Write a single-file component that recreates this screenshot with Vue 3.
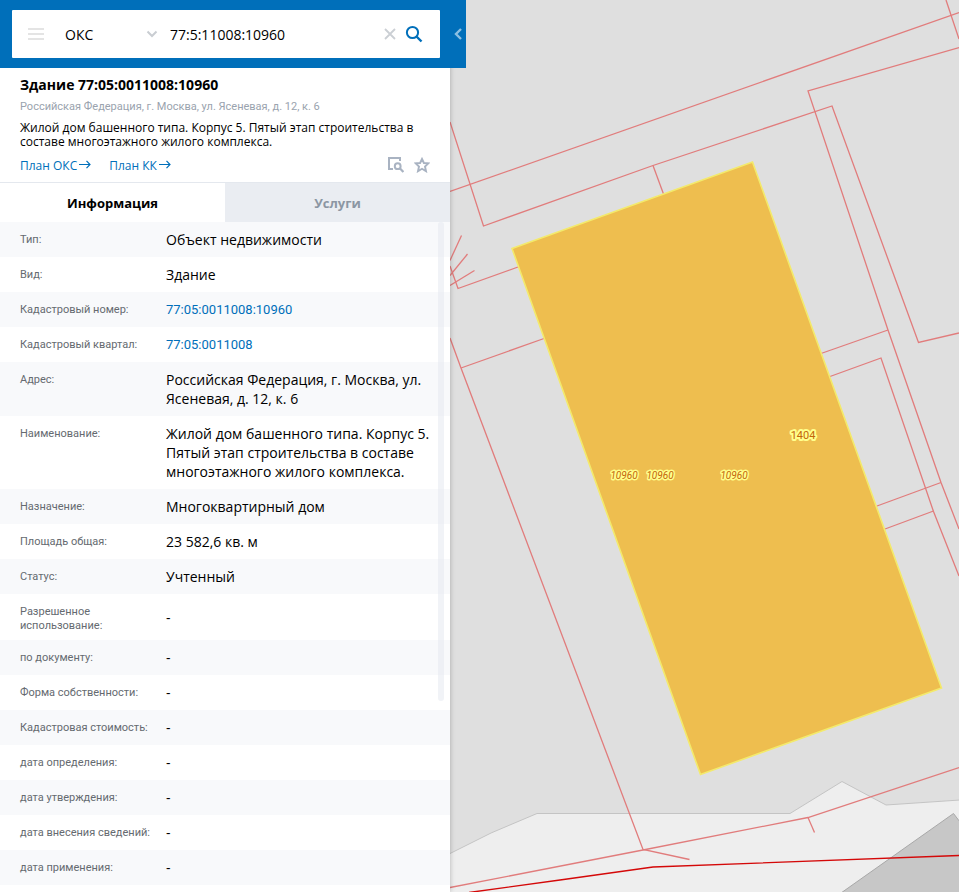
<script setup>
import { ref } from 'vue'

const category = ref('ОКС')
const query = ref('77:5:11008:10960')
const activeTab = ref('info')

const tabs = [
  { id: 'info', label: 'Информация' },
  { id: 'services', label: 'Услуги' }
]

const rows = [
  { label: 'Тип:', value: 'Объект недвижимости' },
  { label: 'Вид:', value: 'Здание' },
  { label: 'Кадастровый номер:', value: '77:05:0011008:10960', link: true },
  { label: 'Кадастровый квартал:', value: '77:05:0011008', link: true },
  { label: 'Адрес:', value: 'Российская Федерация, г. Москва, ул. Ясеневая, д. 12, к. 6' },
  {
    label: 'Наименование:',
    value: 'Жилой дом башенного типа. Корпус 5. Пятый этап строительства в составе многоэтажного жилого комплекса.'
  },
  { label: 'Назначение:', value: 'Многоквартирный дом' },
  { label: 'Площадь общая:', value: '23 582,6 кв. м' },
  { label: 'Статус:', value: 'Учтенный' },
  { label: 'Разрешенное использование:', value: '-' },
  { label: 'по документу:', value: '-' },
  { label: 'Форма собственности:', value: '-' },
  { label: 'Кадастровая стоимость:', value: '-' },
  { label: 'дата определения:', value: '-' },
  { label: 'дата утверждения:', value: '-' },
  { label: 'дата внесения сведений:', value: '-' },
  { label: 'дата применения:', value: '-' }
]

const parcelLines = [
  'M450 191.500L959 12.500',
  'M946 0L959 39',
  'M450 122L483.500 226L653 165.500L832 106L918.500 342.500L959 333',
  'M959 47.500L808 91L888 330L941 482.500L959 529',
  'M653 165.500L663.500 194',
  'M461.500 235.500L450 260.500',
  'M467.500 254L450 275.500',
  'M474.500 270.500L450 285.500',
  'M450 266L458 288.500L518 267',
  'M450 338L461 368L643 849.500L689.500 859.500',
  'M461 368L544 338.500',
  'M821 353.500L888 330',
  'M830 376.500L881 358L933.500 511.500L959 576',
  'M877 506L941 482.500',
  'M885 529L933.500 511',
  'M450 887.500L643 850L808 817.500L959 767.500',
  'M808 817.500L814.500 832.500'
]

const mapLabels = [
  { x: 624, y: 479, text: '10960', italic: true },
  { x: 660, y: 479, text: '10960', italic: true },
  { x: 734, y: 479, text: '10960', italic: true },
  { x: 803, y: 439, text: '1404', italic: false }
]
</script>

<template>
  <div class="app">
    <aside class="panel">
      <header class="topbar">
        <form class="search" role="search" @submit.prevent>
          <button class="icon-btn menu" type="button" aria-label="Меню">
            <svg width="16" height="12" viewBox="0 0 16 12"><path d="M0 1h16M0 6h16M0 11h16" stroke="#e4e4e4" stroke-width="2" /></svg>
          </button>
          <div class="category">
            <select v-model="category" aria-label="Тип объекта">
              <option>ОКС</option>
            </select>
            <svg class="chevron" width="12" height="8" viewBox="0 0 12 8"><path d="M1.500 1.500L6 6L10.500 1.500" fill="none" stroke="#c9cdd2" stroke-width="2" /></svg>
          </div>
          <input v-model="query" class="query" type="text" aria-label="Поиск" />
          <button class="icon-btn clear" type="button" aria-label="Очистить" @click="query = ''">
            <svg width="12" height="12" viewBox="0 0 12 12"><path d="M1 1L11 11M11 1L1 11" stroke="#cbcfd4" stroke-width="1.800" /></svg>
          </button>
          <button class="icon-btn find" type="submit" aria-label="Найти">
            <svg width="18" height="18" viewBox="0 0 18 18"><circle cx="7.500" cy="7.500" r="5.600" fill="none" stroke="#006fba" stroke-width="2" /><path d="M11.500 11.500L16.500 16.500" stroke="#006fba" stroke-width="2.400" /></svg>
          </button>
        </form>
        <button class="collapse" type="button" aria-label="Свернуть панель">
          <svg width="8" height="12" viewBox="0 0 8 12"><path d="M7 1L2 6L7 11" fill="none" stroke="#8bbfe2" stroke-width="2.400" /></svg>
        </button>
      </header>

      <section class="summary">
        <h1>Здание 77:05:0011008:10960</h1>
        <p class="address">Российская Федерация, г. Москва, ул. Ясеневая, д. 12, к. 6</p>
        <p class="description">Жилой дом башенного типа. Корпус 5. Пятый этап строительства в составе многоэтажного жилого комплекса.</p>
        <div class="actions">
          <a v-for="plan in ['План ОКС', 'План КК']" :key="plan" class="plan" href="#">
            <span>{{ plan }}</span>
            <svg width="12" height="10" viewBox="0 0 12 10"><path d="M0 4.500H11M7.500 .8L11 4.500L7.500 8.200" fill="none" stroke="currentColor" stroke-width="1.200" /></svg>
          </a>
          <span class="spacer"></span>
          <button class="icon-btn" type="button" aria-label="Показать на карте">
            <svg width="16" height="16" viewBox="0 0 16 16"><path d="M5 12H1V1H12V4" fill="none" stroke="#a9b3c2" stroke-width="2" /><circle cx="9.700" cy="9.200" r="2.900" fill="none" stroke="#a9b3c2" stroke-width="2" /><path d="M11.800 11.300L15.400 15" stroke="#a9b3c2" stroke-width="2.200" /></svg>
          </button>
          <button class="icon-btn" type="button" aria-label="В избранное">
            <svg width="16" height="16" viewBox="0 0 16 16"><path d="M8 2L9.900 6L14.300 6.400L11 9.500L12 14.200L8 11.800L4 14.200L5 9.500L1.700 6.400L6.100 6Z" fill="none" stroke="#a9b3c2" stroke-width="1.900" /></svg>
          </button>
        </div>
      </section>

      <div class="tabs" role="tablist">
        <button
          v-for="tab in tabs"
          :key="tab.id"
          class="tab"
          :class="{ active: activeTab === tab.id }"
          type="button"
          role="tab"
          :aria-selected="activeTab === tab.id"
          @click="activeTab = tab.id"
        >{{ tab.label }}</button>
      </div>

      <div class="details">
        <div class="scroll">
          <table>
            <tbody>
              <tr v-for="row in rows" :key="row.label">
                <th scope="row">{{ row.label }}</th>
                <td>
                  <a v-if="row.link" href="#">{{ row.value }}</a>
                  <template v-else>{{ row.value }}</template>
                </td>
              </tr>
            </tbody>
          </table>
        </div>
        <div class="thumb"></div>
      </div>
    </aside>

    <main class="map">
      <svg class="canvas" viewBox="450 0 509 892" preserveAspectRatio="xMinYMin slice" role="img" aria-label="Кадастровая карта">
        <path class="road" d="M449 854L491 833L537 813.500H790L842 781.500L886 805L960 800V893H449Z" />
        <path class="block" d="M841 893L953.500 813.500L960 822V893Z" />
        <path v-for="d in parcelLines" :key="d" class="parcel" :d="d" />
        <path class="quarter" d="M469 892.500L560 880L653 867L959 855.500" />
        <path class="building" d="M512 248.500L752.500 162L941.500 688L700.500 774.500Z" />
        <text
          v-for="label in mapLabels"
          :key="label.x"
          class="map-label"
          :class="{ italic: label.italic }"
          :x="label.x"
          :y="label.y"
        >{{ label.text }}</text>
      </svg>
    </main>
  </div>
</template>

<style>
body {
  margin: 0;
}
</style>

<style scoped>
.app {
  display: grid;
  grid-template-columns: 450px minmax(0, 1fr);
  height: 100vh;
  overflow: hidden;
  font-family: "Open Sans", "Noto Sans", sans-serif;
  color: #000;
}

.panel {
  position: relative;
  z-index: 1;
  display: flex;
  flex-direction: column;
  min-height: 0;
  background: #fff;
  box-shadow: 0 0 5px rgba(0, 0, 0, 0.25);
}

button {
  padding: 0;
  border: 0;
  background: none;
  font: inherit;
  cursor: pointer;
}

svg {
  display: block;
}

a {
  color: #006fba;
  text-decoration: none;
}

.topbar {
  position: relative;
  padding: 10px 10px 10px 12px;
  background: #006fba;
}

.search {
  display: flex;
  align-items: center;
  height: 48px;
  padding: 0 17px 0 16px;
  border-radius: 1px;
  background: #fff;
}

.category {
  display: flex;
  align-items: center;
  width: 93px;
  margin-left: 21px;
}

.category select {
  flex: 1;
  min-width: 0;
  padding: 0;
  border: 0;
  background: none;
  appearance: none;
  font: inherit;
  font-size: 14px;
  color: #000;
}

.query {
  flex: 1;
  min-width: 0;
  margin-left: 12px;
  padding: 0;
  border: 0;
  outline: 0;
  font: inherit;
  font-size: 14px;
  color: #000;
}

.find {
  margin-left: 9px;
}

.collapse {
  position: absolute;
  top: 0;
  left: 100%;
  display: flex;
  align-items: center;
  justify-content: center;
  width: 16px;
  height: 100%;
  background: #006fba;
}

.summary {
  padding: 7px 20px;
  border-bottom: 1px solid #e4e8ee;
}

h1,
p {
  margin: 0;
}

h1 {
  font-size: 14px;
  line-height: 20px;
  font-weight: 700;
}

.address {
  margin-top: 5px;
  font-family: Roboto, "Open Sans", sans-serif;
  font-size: 11px;
  line-height: 14px;
  color: #9aa3ae;
}

.description {
  margin-top: 7px;
  font-size: 12px;
  line-height: 14px;
}

.actions {
  display: flex;
  align-items: center;
  gap: 10px;
  height: 20px;
  margin-top: 6px;
  font-size: 12px;
}

.plan {
  display: flex;
  align-items: center;
  gap: 2px;
  margin-right: 8px;
}

.spacer {
  flex: 1;
}

.tabs {
  display: grid;
  grid-template-columns: 1fr 1fr;
}

.tab {
  height: 39px;
  background: #eaedf2;
  font-size: 13px;
  font-weight: 700;
  color: #8c96a3;
}

.tab.active {
  background: #fff;
  color: #000;
}

.details {
  position: relative;
  flex: 1;
  min-height: 0;
}

.scroll {
  height: 100%;
  overflow-y: auto;
  scrollbar-width: none;
}

table {
  width: 100%;
  table-layout: fixed;
  border-collapse: collapse;
}

tr:nth-child(odd) {
  background: #f8f9fb;
}

th {
  width: 146px;
  padding: 11px 0 7px 20px;
  font-family: Roboto, "Open Sans", sans-serif;
  font-size: 11px;
  line-height: 14px;
  font-weight: 400;
  text-align: left;
  vertical-align: top;
  color: #656a70;
}

td {
  padding: 8px 20px 8px 0;
  font-size: 14px;
  line-height: 19px;
}

td a {
  display: block;
  font-family: Roboto, "Open Sans", sans-serif;
  font-size: 13px;
}

.thumb {
  position: absolute;
  top: 0;
  right: 6px;
  width: 6px;
  height: 71.5%;
  border-radius: 3px;
  background: rgba(228, 231, 240, 0.5);
}

.map {
  min-width: 0;
  background: #dfdfdf;
}

.canvas {
  width: 100%;
  height: 100%;
}

.road {
  fill: #eee;
  stroke: #c4c4c4;
}

.block {
  fill: #c7c7c7;
  stroke: #a8a8a8;
}

.parcel {
  fill: none;
  stroke: #e17c7c;
  stroke-width: 1.3;
}

.quarter {
  fill: none;
  stroke: #d40808;
  stroke-width: 1.4;
}

.building {
  fill: #eebe4f;
  stroke: #f3ea6c;
  stroke-width: 1.6;
}

.map-label {
  font-family: Roboto, "Open Sans", sans-serif;
  font-size: 11px;
  text-anchor: middle;
  fill: #c4660a;
  stroke: #ffff8c;
  stroke-width: 4px;
  stroke-linejoin: round;
  paint-order: stroke;
}

.map-label.italic {
  font-size: 10px;
  font-style: italic;
  stroke-width: 3px;
}
</style>
